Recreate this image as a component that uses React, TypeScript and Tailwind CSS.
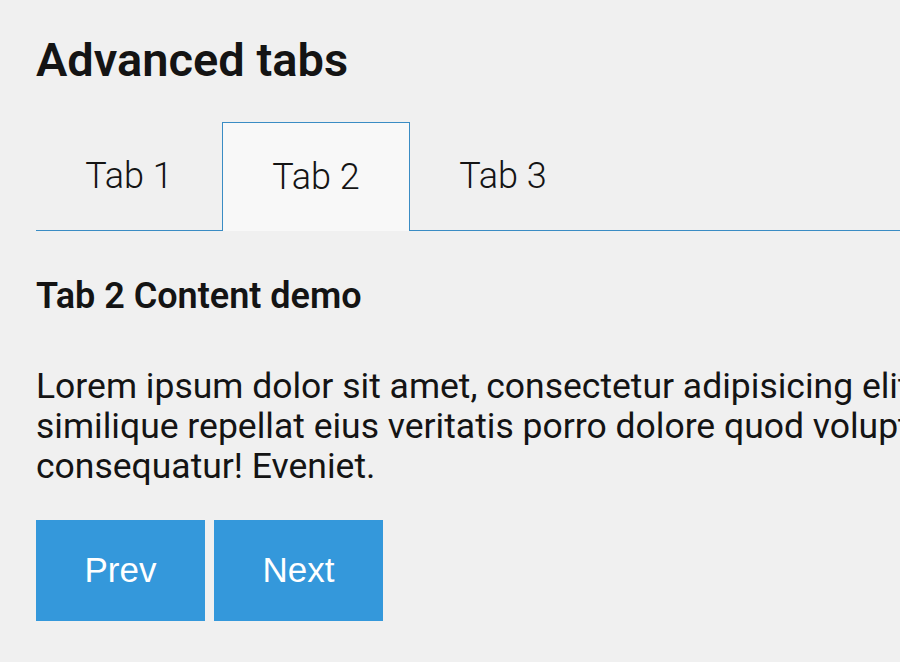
import { useState } from "react";

const tabs = ["Tab 1", "Tab 2", "Tab 3"];

const App = () => {
  const [active, setActive] = useState(1);

  return (
    <div className="min-h-screen w-full overflow-hidden bg-[#f0f0f0] pl-9 pt-9 font-['Roboto',sans-serif] text-[#141414]">
      <h1 className="text-[47px] font-semibold leading-none">Advanced tabs</h1>

      {/* Tab bar */}
      <div className="mt-[39px] flex h-[109px] border-b border-[#3a8cc4]">
        {tabs.map((tab, i) =>
          i === active ? (
            <button
              key={tab}
              className="-mb-px flex h-[109px] w-[188px] items-center justify-center border border-b-0 border-[#3a8cc4] bg-[#f8f8f8] text-[36px] font-light"
              onClick={() => setActive(i)}
            >
              {tab}
            </button>
          ) : (
            <button
              key={tab}
              className="flex h-[108px] w-[186px] items-center justify-center text-[36px] font-light"
              onClick={() => setActive(i)}
            >
              {tab}
            </button>
          )
        )}
      </div>

      {/* Content */}
      <h2 className="mt-[47px] text-[36px] font-semibold leading-none">Tab {active + 1} Content demo</h2>
      <p className="mt-[52px] w-[1200px] text-[35.5px] leading-[40px]">
        Lorem ipsum dolor sit amet, consectetur adipisicing elit. Atque,
        <br />
        similique repellat eius veritatis porro dolore quod voluptatem
        <br />
        consequatur! Eveniet.
      </p>

      <div className="mt-[34px] flex gap-[9px] font-['Liberation_Sans',Arial,sans-serif]">
        <button
          className="h-[101px] w-[169px] bg-[#3498db] text-[35px] text-white"
          onClick={() => setActive(Math.max(0, active - 1))}
        >
          Prev
        </button>
        <button
          className="h-[101px] w-[169px] bg-[#3498db] text-[35px] text-white"
          onClick={() => setActive(Math.min(tabs.length - 1, active + 1))}
        >
          Next
        </button>
      </div>
    </div>
  );
};

export default App;
